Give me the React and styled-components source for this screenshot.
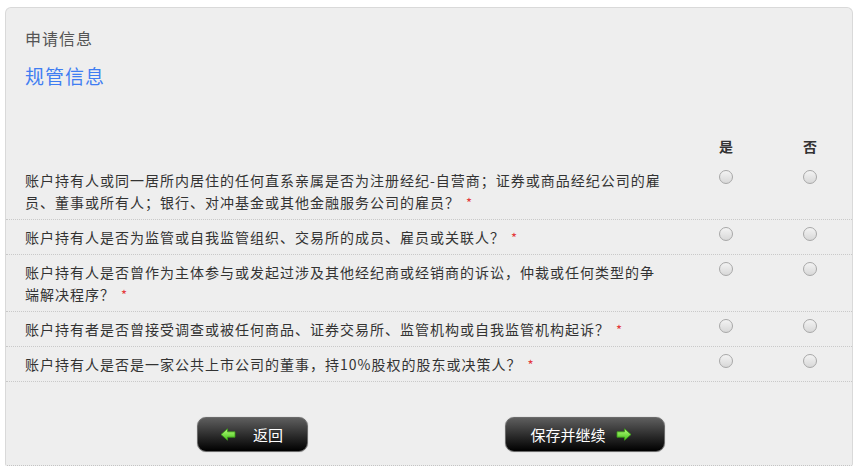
import React, { useState } from "react"
import styled, { createGlobalStyle } from "styled-components"

const GlobalStyle = createGlobalStyle`
  body {
    margin: 0;
    background: #fff;
    font-family: "Noto Sans CJK SC", "Microsoft YaHei", sans-serif;
  }
`

const Panel = styled.div`
  box-sizing: border-box;
  width: 848px;
  margin: 7px 0 0 5px;
  padding: 18px 0 13px;
  background: #eeeeee;
  border: 1px solid #d9d9d9;
  border-bottom: 1px dotted #c4c4c4;
  border-radius: 6px 6px 2px 2px;
`

const Crumb = styled.div`
  margin-left: 19px;
  font-size: 16px;
  line-height: 24px;
  color: #555;
  letter-spacing: 1px;
`

const Title = styled.h2`
  margin: 12px 0 0 19px;
  font-size: 19px;
  line-height: 28px;
  font-weight: normal;
  color: #3f7df2;
  letter-spacing: 1px;
`

const Row = styled.div`
  display: grid;
  grid-template-columns: 1fr 84px 84px;
  padding: ${p => (p.$head ? "4px 0 8px 19px" : "6px 0 6px 19px")};
  margin-top: ${p => (p.$head ? "43px" : "0")};
  border-bottom: ${p => (p.$head ? "none" : "1px dotted #c9c9c9")};
`

const Question = styled.div`
  max-width: 640px;
  height: ${p => p.$lines * 22}px;
  font-size: 14px;
  line-height: 22px;
  letter-spacing: 1px;
  color: #333;
`

const Star = styled.span`
  display: inline-block;
  color: #e4393c;
  font-size: 13px;
  line-height: 10px;
  margin-left: 6px;
`

const ColHead = styled.div`
  text-align: center;
  font-size: 14px;
  line-height: 18px;
  font-weight: bold;
  color: #333;
`

const Cell = styled.div`
  display: flex;
  justify-content: center;
  align-items: flex-start;
  padding-top: 1px;
`

const Radio = styled.input`
  appearance: none;
  width: 14px;
  height: 14px;
  margin: 0;
  border-radius: 50%;
  border: 1px solid #a8a8a8;
  background: linear-gradient(#f3f3f3, #d8d8d8);
  box-sizing: border-box;
  cursor: pointer;
  &:checked {
    background: radial-gradient(circle, #555 0 3px, #eee 3.5px);
  }
`

const Actions = styled.div`
  display: flex;
  gap: 197px;
  margin: 35px 0 0 191px;
`

const NavButton = styled.button`
  display: flex;
  align-items: center;
  justify-content: center;
  gap: ${p => p.$gap};
  width: ${p => p.$width};
  height: 35px;
  padding: ${p => p.$pad};
  border: 1px solid #6a6a6a;
  border-radius: 9px;
  background: linear-gradient(#5e5e5e, #2a2a2a 55%, #000);
  box-shadow: 0 0 1px rgba(0, 0, 0, 0.4);
  color: #fff;
  font-family: "Noto Sans CJK SC", sans-serif;
  font-size: 15px;
  box-sizing: border-box;
  cursor: pointer;
`

const Arrow = ({ dir }) => (
  <svg width="16" height="13" viewBox="0 0 16 13" style={{ transform: dir === "right" ? "scaleX(-1)" : "none" }}>
    <defs>
      <linearGradient id="ag" x1="0" y1="0" x2="0" y2="1">
        <stop offset="0" stopColor="#b6ff7a" />
        <stop offset="1" stopColor="#45c21c" />
      </linearGradient>
    </defs>
    <path d="M1 6.5 L7.5 0.8 L7.5 3.8 L15 3.8 L15 9.2 L7.5 9.2 L7.5 12.2 Z" fill="url(#ag)" stroke="#3a9a18" strokeWidth="0.8" strokeLinejoin="round" />
  </svg>
)

const questions = [
  { text: "账户持有人或同一居所内居住的任何直系亲属是否为注册经纪-自营商；证券或商品经纪公司的雇员、董事或所有人；银行、对冲基金或其他金融服务公司的雇员？", lines: 2 },
  { text: "账户持有人是否为监管或自我监管组织、交易所的成员、雇员或关联人？", lines: 1 },
  { text: "账户持有人是否曾作为主体参与或发起过涉及其他经纪商或经销商的诉讼，仲裁或任何类型的争端解决程序？", lines: 2 },
  { text: "账户持有者是否曾接受调查或被任何商品、证券交易所、监管机构或自我监管机构起诉？", lines: 1 },
  { text: "账户持有人是否是一家公共上市公司的董事，持10%股权的股东或决策人？", lines: 1 },
]

export default function App() {
  const [answers, setAnswers] = useState({})

  return (
    <>
      <GlobalStyle />
      <Panel>
        <Crumb>申请信息</Crumb>
        <Title>规管信息</Title>
        <Row $head>
          <div />
          <ColHead>是</ColHead>
          <ColHead>否</ColHead>
        </Row>
        {questions.map((q, i) => (
          <Row key={i}>
            <Question $lines={q.lines}>
              {q.text}<Star>*</Star>
            </Question>
            {["yes", "no"].map(v => (
              <Cell key={v}>
                <Radio
                  type="radio"
                  name={"q" + i}
                  checked={answers[i] === v}
                  onChange={() => setAnswers({ ...answers, [i]: v })}
                />
              </Cell>
            ))}
          </Row>
        ))}
        <Actions>
          <NavButton $width="111px" $gap="17px" $pad="0 2px 0 0">
            <Arrow dir="left" />
            返回
          </NavButton>
          <NavButton $width="160px" $gap="10px" $pad="0 8px 0 0">
            保存并继续
            <Arrow dir="right" />
          </NavButton>
        </Actions>
      </Panel>
    </>
  )
}
